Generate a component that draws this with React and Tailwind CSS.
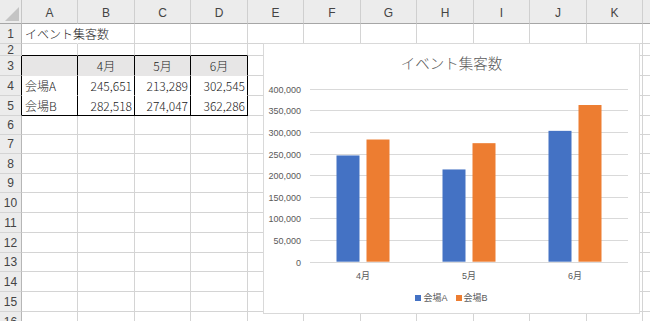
import React from 'react';

const COLS = ['A', 'B', 'C', 'D', 'E', 'F', 'G', 'H', 'I', 'J', 'K', 'L'];
const ROW_COUNT = 16;

// cell contents by "row-col"; spill = text runs over the next cells like Excel
const cells = {
  '1-0': { text: 'イベント集客数', align: 'left', spill: true },
  '3-1': { text: '4月', align: 'center' },
  '3-2': { text: '5月', align: 'center' },
  '3-3': { text: '6月', align: 'center' },
  '4-0': { text: '会場A', align: 'left' },
  '4-1': { text: '245,651', align: 'right' },
  '4-2': { text: '213,289', align: 'right' },
  '4-3': { text: '302,545', align: 'right' },
  '5-0': { text: '会場B', align: 'left' },
  '5-1': { text: '282,518', align: 'right' },
  '5-2': { text: '274,047', align: 'right' },
  '5-3': { text: '362,286', align: 'right' },
};

const series = [
  { name: '会場A', color: '#4472c4', swatch: 'bg-[#4472c4]', values: [245651, 213289, 302545] },
  { name: '会場B', color: '#ed7d31', swatch: 'bg-[#ed7d31]', values: [282518, 274047, 362286] },
];

const inTable = (r, c) => r >= 3 && r <= 5 && c <= 3;

const Cell = ({ r, c }) => {
  const data = cells[`${r}-${c}`];
  let bg = '';
  let br = 'border-r-[#d4d4d4]';
  let bb = 'border-b-[#d4d4d4]';
  if (inTable(r, c)) {
    br = 'border-r-black';
    if (r === 3) {
      bg = 'bg-[#e7e6e6]';
      bb = 'border-b-[#e7e6e6]';
    } else if (r === 4) {
      bb = 'border-b-white';
    } else {
      bb = 'border-b-black';
    }
  }
  if (r === 2 && c <= 3) bb = 'border-b-black';
  if (data?.spill) br = 'border-r-white';
  const justify =
    data?.align === 'right' ? 'justify-end pr-[2px]' : data?.align === 'center' ? 'justify-center' : 'justify-start pl-[3px]';
  return (
    <div
      className={`flex items-center whitespace-nowrap border-r border-b font-['Noto_Sans_CJK_JP','Liberation_Sans',sans-serif] text-[12px] font-light text-[#222] ${
        data?.spill ? 'relative z-10 overflow-visible' : 'overflow-hidden'
      } ${bg} ${br} ${bb} ${justify}`}
    >
      {data && <span className="leading-none">{data.text}</span>}
    </div>
  );
};

const Chart = () => {
  const y0 = 189.7;
  const plotH = 173;
  const gridTicks = [400000, 350000, 300000, 250000, 200000, 150000, 100000, 50000, 0];
  const centers = [99, 205, 311];
  const months = ['4月', '5月', '6月'];
  const yOf = (v) => y0 - (v / 400000) * plotH;

  return (
    <div className="absolute left-[263px] top-[43px] z-20 flex h-[271px] w-[377px] flex-col border border-[#d9d9d9] bg-white">
      <div className="pt-[10px] text-center font-['Noto_Sans_CJK_JP','Liberation_Sans',sans-serif] text-[14.5px] font-light leading-[18px] text-[#595959]">
        イベント集客数
      </div>
      <svg width="375" height="214" className="block" fontFamily="Liberation Sans, Noto Sans CJK JP, sans-serif">
        {gridTicks.map((t) => {
          const y = Math.round(yOf(t)) + 0.5;
          return (
            <g key={t}>
              <line x1="46" x2="364" y1={y} y2={y} stroke="#d9d9d9" strokeWidth="1" />
              <text x="37" y={y} dy="0.35em" textAnchor="end" fontSize="9" fill="#595959">
                {t.toLocaleString('en-US')}
              </text>
            </g>
          );
        })}
        {centers.map((cx, i) => (
          <g key={cx}>
            {series.map((s, si) => {
              const x = si === 0 ? cx - 26.5 : cx + 3.5;
              const top = yOf(s.values[i]);
              return <rect key={s.name} x={x} y={top} width="23" height={y0 - top} fill={s.color} />;
            })}
            <text x={cx} y="204" dy="0.35em" textAnchor="middle" fontSize="9" fill="#595959">
              {months[i]}
            </text>
          </g>
        ))}
      </svg>
      <div className="mt-[6px] flex items-center justify-center gap-[8px] text-[9px] leading-[12px] text-[#595959]">
        {series.map((s) => (
          <div key={s.name} className="flex items-center gap-[2px]">
            <span className={`inline-block h-[6px] w-[6px] ${s.swatch}`} />
            <span>{s.name}</span>
          </div>
        ))}
      </div>
    </div>
  );
};

export default function App() {
  const rows = Array.from({ length: ROW_COUNT }, (_, i) => i + 1);
  return (
    <div className="relative h-[321px] w-[650px] overflow-hidden bg-white font-['Liberation_Sans','Noto_Sans_CJK_JP',sans-serif]">
      <div className="grid grid-cols-[22px_56px_57px_56px_57px_56px_57px_56px_57px_56px_57px_56px_57px] grid-rows-[24px_20px_12px_20px_20px_20px_19px_19px_20px_19px_20px_20px_20px_19px_20px_20px_20px]">
        {/* select-all corner */}
        <div className="relative border-r border-b border-r-[#c6c6c6] border-b-[#a6a6a6] bg-[#ececec]">
          <svg width="21" height="23" className="absolute left-0 top-0">
            <polygon points="19,7 19,21 5,21" fill="#c4c4c4" />
          </svg>
        </div>
        {COLS.map((c) => (
          <div
            key={c}
            className="flex items-center justify-center border-r border-b border-r-[#cfcfcf] border-b-[#a6a6a6] bg-[#ececec] pt-[2px] text-[12px] text-[#444]"
          >
            {c}
          </div>
        ))}
        {rows.map((r) => (
          <React.Fragment key={r}>
            <div
              className={`flex items-center justify-center overflow-hidden border-r border-b border-b-[#d4d4d4] bg-[#ececec] text-[12px] leading-none text-[#444] ${
                r >= 3 && r <= 5 ? 'border-r-black' : 'border-r-[#b6b6b6]'
              }`}
            >
              {r}
            </div>
            {COLS.map((_, c) => (
              <Cell key={c} r={r} c={c} />
            ))}
          </React.Fragment>
        ))}
      </div>
      <Chart />
    </div>
  );
}
